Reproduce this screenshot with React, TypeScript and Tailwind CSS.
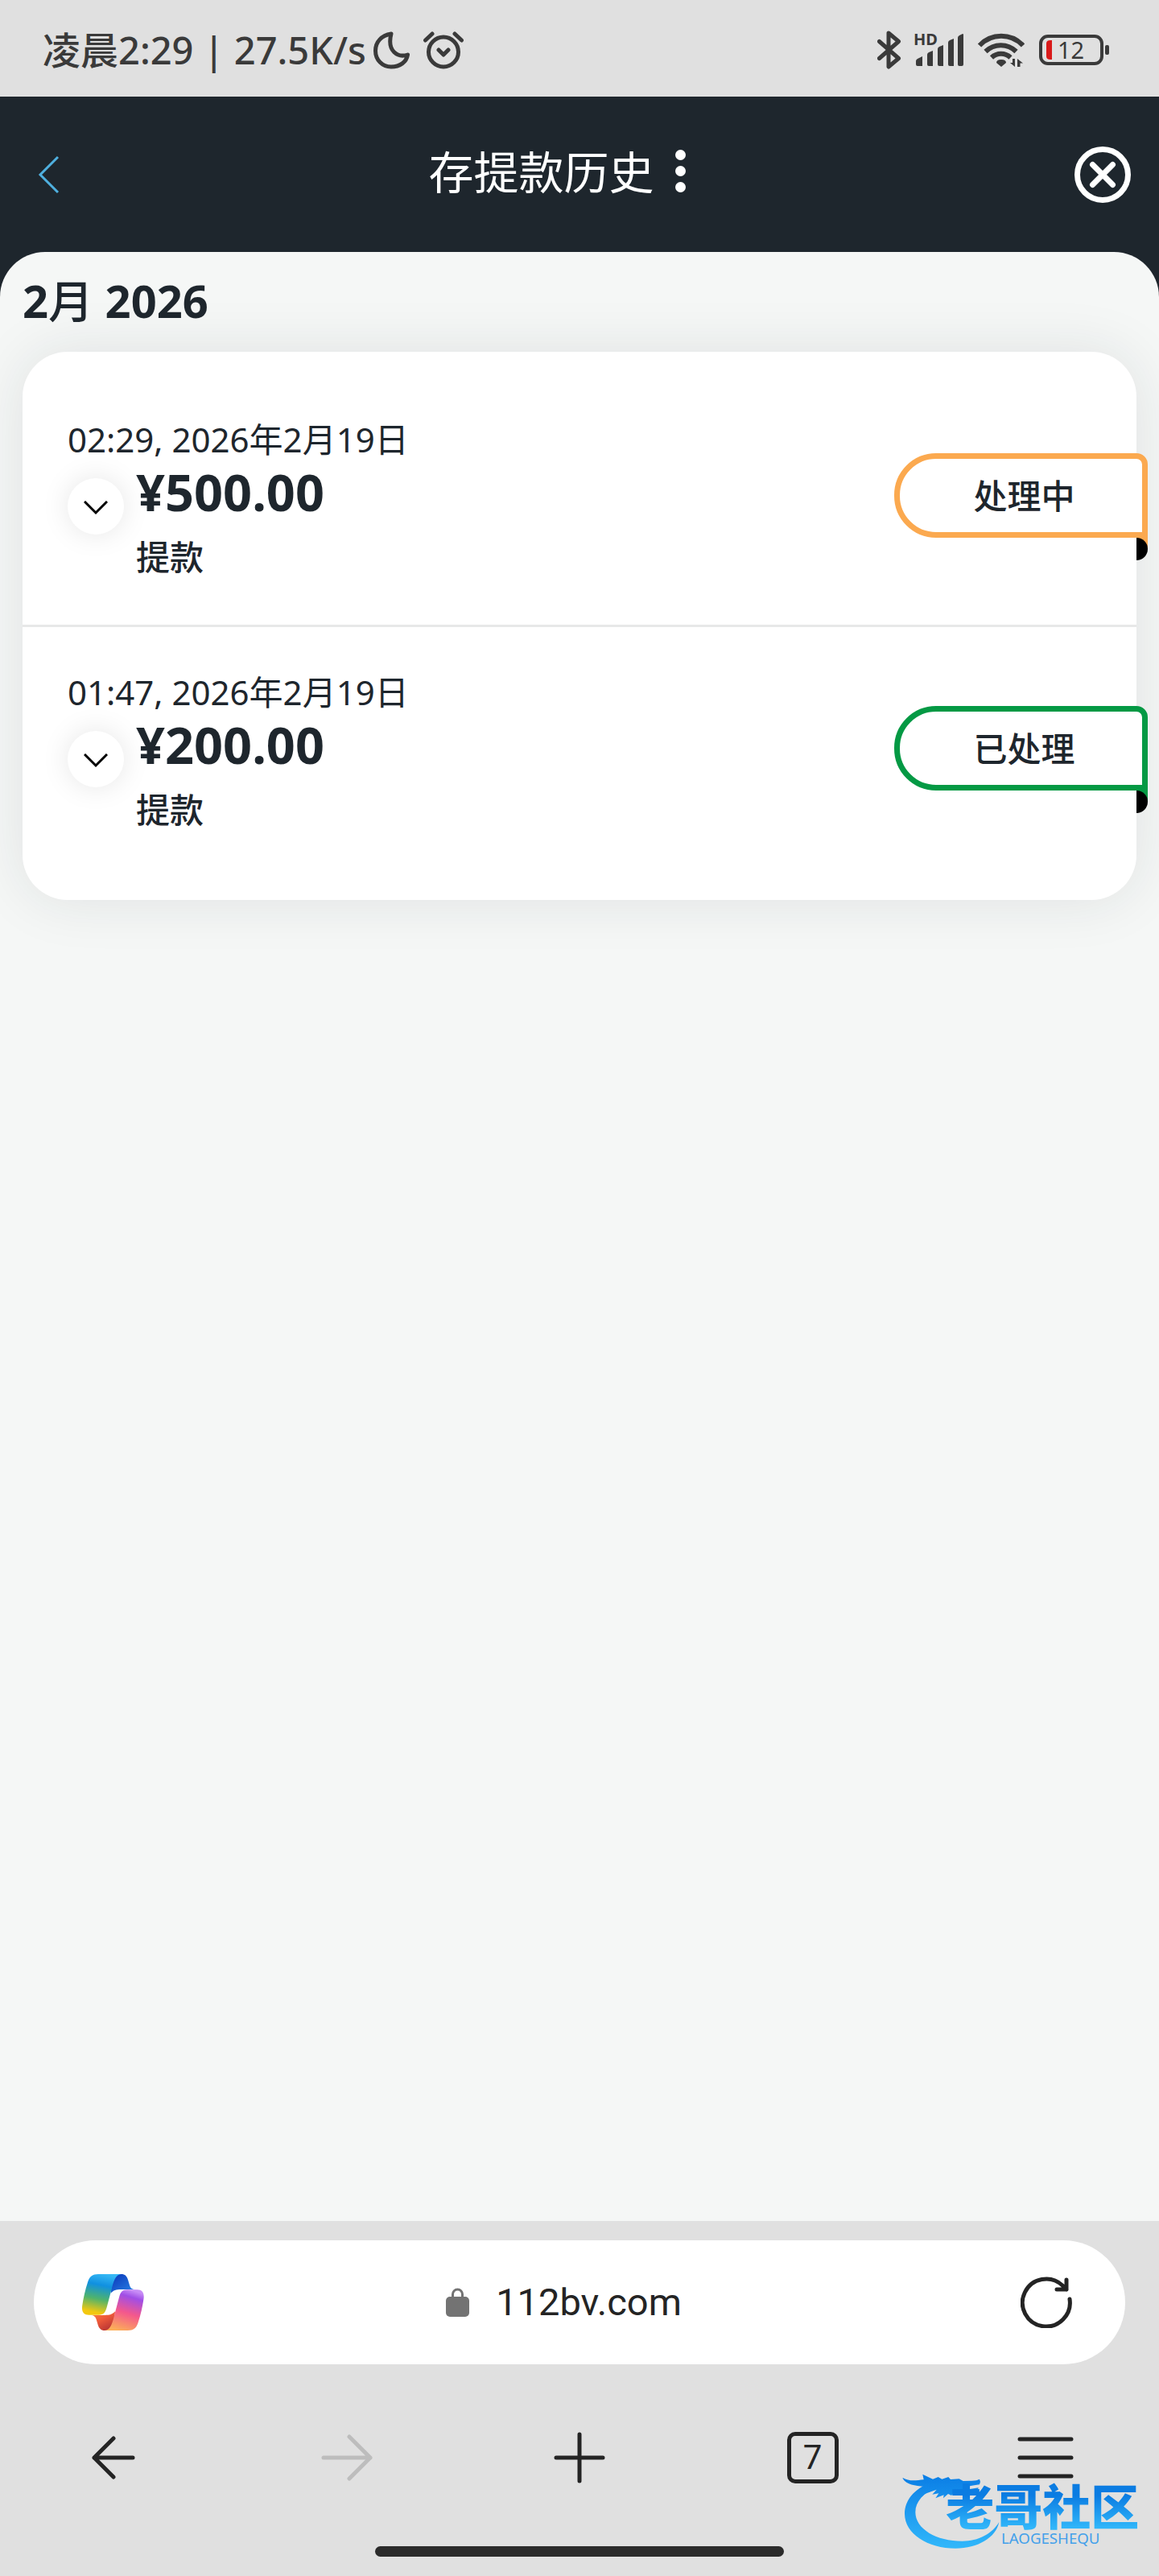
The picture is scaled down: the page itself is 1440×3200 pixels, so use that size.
interface Transaction {
  date: string;
  amount: string;
  type: string;
  status: string;
  borderColor: string;
  foldColor: string;
}

const transactions: Transaction[] = [
  {
    date: '02:29, 2026年2月19日',
    amount: '¥500.00',
    type: '提款',
    status: '处理中',
    borderColor: 'border-[#fba94f]',
    foldColor: 'bg-[#fba94f]',
  },
  {
    date: '01:47, 2026年2月19日',
    amount: '¥200.00',
    type: '提款',
    status: '已处理',
    borderColor: 'border-[#049944]',
    foldColor: 'bg-[#049944]',
  },
];

function StatusBar() {
  return (
    <div className="h-[120px] bg-[#e0e0e0] pt-[3px] pl-[53px] pr-[61px] flex items-center justify-between text-[#3a3a3a]">
      <div className="flex items-center">
        <span className="text-[47px] leading-[60px] font-medium whitespace-nowrap">凌晨2:29 | 27.5K/s</span>
        <svg className="ml-2 w-[46px] h-[48px]" viewBox="0 0 46 48" fill="none" stroke="currentColor" strokeWidth="5" strokeLinejoin="round">
          <path d="M23 4C11 6 3.500 14 3.500 25c0 11.500 8.500 20 19.500 20 11 0 19-6 20.500-15-12 4-26-4-20.500-26Z" />
        </svg>
        <svg className="ml-4 w-[52px] h-[48px]" viewBox="0 0 52 48" fill="none" stroke="currentColor" strokeWidth="5" strokeLinecap="round" strokeLinejoin="round">
          <circle cx="26" cy="26.500" r="18.500" />
          <path d="m20 24 6 6 6-6M3.500 12 12 4M48.500 12 40 4" />
        </svg>
      </div>

      <div className="flex items-center gap-[15px]">
        <svg className="w-[30px] h-[48px]" viewBox="0 0 30 48" fill="none" stroke="currentColor" strokeWidth="5" strokeLinecap="round" strokeLinejoin="round">
          <path d="m2.500 13.500 24 21L14 45V3l12.500 10.500-24 21" />
        </svg>
        <svg className="w-[64px] h-[44px] overflow-visible" viewBox="0 0 64 44" fill="currentColor">
          <text x="0" y="16" fontSize="20" fontWeight="700">HD</text>
          <path d="M3 36q0-2 2-3l6-3v12H5q-2 0-2-2ZM17 28q0-2 2-3l5-2v19h-5q-2 0-2-2ZM30 21q0-2 2-3l5-2v26h-5q-2 0-2-2ZM43 13q0-2 2-3l5-2v34h-5q-2 0-2-2ZM55 7q0-2 2-3l4-2q1 0 1 1v37q0 2-2 2h-3q-2 0-2-2Z" />
        </svg>
        <svg className="w-[60px] h-[44px]" viewBox="0 0 60 44" fill="none" stroke="currentColor" strokeWidth="6">
          <path d="M3 16.500a37 37 0 0 1 54 0M10.500 24a27 27 0 0 1 38 0M18 31.500a17 17 0 0 1 23.500 0" />
          <path d="m30 43-6-5q0-4 6-4t6 4Z" fill="currentColor" stroke="none" />
          <path d="M47 33v10l-6-5h3v-5ZM50 43V33l7 5.500h-3.500V43Z" fill="currentColor" stroke="none" />
        </svg>
        <svg className="w-[90px] h-[40px]" viewBox="0 0 90 40" fill="none">
          <rect x="4" y="3" width="76" height="34" rx="9" stroke="currentColor" strokeWidth="4" />
          <rect x="84" y="14" width="5" height="12" rx="2" fill="currentColor" />
          <path d="M16 8h2v24h-2q-5 0-5-4V12q0-4 5-4Z" fill="#d91a1a" />
          <text x="25" y="31" fontSize="29" fill="currentColor">12</text>
        </svg>
      </div>
    </div>
  );
}

function PageHeader() {
  return (
    <header className="h-[193px] px-[35px] flex items-center justify-between text-white">
      <button type="button" aria-label="返回" className="w-[70px] flex text-[#4fb0df]">
        <svg className="ml-3 w-[27px] h-[48px]" viewBox="0 0 27 48" fill="none" stroke="currentColor" strokeWidth="3">
          <path d="M25 2 3 24l22 22" />
        </svg>
      </button>
      <div className="-mt-2 flex items-center gap-[26px] pr-[56px]">
        <h1 className="text-[56px] leading-[76px] whitespace-nowrap">存提款历史</h1>
        <button type="button" aria-label="更多" className="flex flex-col gap-[7px]">
          <span className="size-[13px] rounded-full bg-white" />
          <span className="size-[13px] rounded-full bg-white" />
          <span className="size-[13px] rounded-full bg-white" />
        </button>
      </div>
      <button type="button" aria-label="关闭">
        <svg className="size-[70px]" viewBox="0 0 70 70" fill="none" stroke="currentColor" strokeWidth="7" strokeLinecap="round">
          <circle cx="35" cy="35" r="31.500" />
          <path d="m22.500 22.500 25 25M47.500 22.500l-25 25" />
        </svg>
      </button>
    </header>
  );
}

function TransactionRow({ item }: { item: Transaction }) {
  return (
    <li className="pl-14 pt-[53px] pb-14 flex items-start justify-between not-last:border-b-3 border-[#e7e8e8]">
      <div>
        <p className="text-[42px] leading-[55px]">{item.date}</p>
        <div className="flex items-start gap-[15px]">
          <button
            type="button"
            aria-label="展开"
            className="mt-[21px] size-[70px] shrink-0 rounded-full bg-white shadow-[0_0_35px_rgba(0,0,0,0.1)] flex items-center justify-center text-black"
          >
            <svg className="mt-1 w-[30px] h-[18px]" viewBox="0 0 30 18" fill="none" stroke="currentColor" strokeWidth="3">
              <path d="m1 1 14 14L29 1" />
            </svg>
          </button>
          <div>
            <p className="text-[63px] leading-[76px] font-bold">{item.amount}</p>
            <p className="mt-[15px] text-[42px] leading-[56px] font-medium">{item.type}</p>
          </div>
        </div>
      </div>

      {/* Ribbon that folds over the right edge of the card */}
      <div
        className={`relative mt-[45px] -mr-[14px] w-[315px] h-[105px] pl-2 border-7 rounded-l-[52px] rounded-tr-[14px] bg-white flex items-center justify-center ${item.borderColor}`}
      >
        <span className="text-[42px] leading-[56px] font-medium">{item.status}</span>
        <span className={`absolute -right-[7px] top-[98px] size-[14px] ${item.foldColor}`} />
        <span className="absolute -right-[7px] top-[98px] w-[14px] h-[28px] rounded-r-full bg-black" />
      </div>
    </li>
  );
}

function CopilotLogo() {
  return (
    <svg className="w-[77px] h-[70px]" viewBox="65 75 231 210">
      <defs>
        <linearGradient id="ribbonLeft" x1="0.6" y1="0" x2="0.4" y2="1">
          <stop offset="0" stopColor="#36b8f5" />
          <stop offset="0.28" stopColor="#1090e0" />
          <stop offset="0.62" stopColor="#4fb36c" />
          <stop offset="0.95" stopColor="#f3c80f" />
        </linearGradient>
        <linearGradient id="ribbonRight" x1="0.65" y1="0" x2="0.35" y2="1">
          <stop offset="0" stopColor="#c78cf6" />
          <stop offset="0.16" stopColor="#a04ee6" />
          <stop offset="0.55" stopColor="#f4588c" />
          <stop offset="1" stopColor="#fcae58" />
        </linearGradient>
        <linearGradient id="foldTop" x1="0" y1="0" x2="1" y2="1">
          <stop offset="0" stopColor="#0a35b8" />
          <stop offset="1" stopColor="#2a86e8" />
        </linearGradient>
        <linearGradient id="foldBottom" x1="0" y1="0" x2="0.7" y2="1">
          <stop offset="0" stopColor="#ff8a3c" />
          <stop offset="0.5" stopColor="#ee5a3a" />
          <stop offset="1" stopColor="#b83434" />
        </linearGradient>
      </defs>
      <path d="M195 75h16c14 0 21 8 25 21l6 20c3 10 9 16 22 16h-54c-18 0-28 3-38 14l4-50Z" fill="url(#foldTop)" />
      <path d="M165 285h-16c-14 0-21-8-25-21l-6-20c-3-10-9-16-22-16h54c18 0 28-3 38-14l-4 50Z" fill="url(#foldBottom)" />
      <path d="M125 75h86c-20 2-27 22-34 48l-20 76c-6 20-12 28-30 28H90c-21 0-28-14-24-37 4-25 10-55 21-88 6-18 17-27 38-27Z" fill="url(#ribbonLeft)" />
      <path d="M235 285h-86c20-2 27-22 34-48l20-76c6-20 12-28 30-28h37c21 0 28 14 24 37-4 25-10 55-21 88-6 18-17 27-38 27Z" fill="url(#ribbonRight)" />
    </svg>
  );
}

function AddressBar() {
  return (
    <div className="h-[154px] pl-[60px] pr-[66px] rounded-full bg-white flex items-center">
      <button type="button" aria-label="Copilot">
        <CopilotLogo />
      </button>
      <button type="button" aria-label="地址栏" className="flex-1 pr-[46px] flex items-center justify-center gap-[33px]">
        <svg className="w-[29px] h-[36px]" viewBox="0 0 29 36" fill="none">
          <rect y="11" width="29" height="25" rx="5" fill="#737373" />
          <path d="M8.500 13V8a6 6 0 0 1 12 0v5" stroke="#737373" strokeWidth="3" />
        </svg>
        <span className="text-[47px] leading-[60px] font-[Roboto,sans-serif]">112bv.com</span>
      </button>
      <button type="button" aria-label="刷新">
        <svg className="size-[64px]" viewBox="0 0 64 64" fill="none" stroke="currentColor" strokeWidth="5" strokeLinecap="round" strokeLinejoin="round">
          <path d="M61 28a29.500 29.500 0 1 1-9-17l5 5M57 4v12H45" />
        </svg>
      </button>
    </div>
  );
}

function NavBar() {
  return (
    <nav className="px-[99px] pt-[74px] flex items-center justify-between">
      <button type="button" aria-label="后退" className="w-[84px] h-[84px] flex items-center justify-center">
        <svg className="w-[54px] h-[54px]" viewBox="0 0 54 54" fill="none" stroke="currentColor" strokeWidth="5" strokeLinecap="round" strokeLinejoin="round">
          <path d="M51 27H3M27 3 3 27l24 24" />
        </svg>
      </button>
      <button type="button" aria-label="前进" disabled className="w-[84px] h-[84px] flex items-center justify-center text-[#bdbdbd]">
        <svg className="w-[64px] h-[58px]" viewBox="0 0 64 58" fill="none" stroke="currentColor" strokeWidth="5" strokeLinecap="round" strokeLinejoin="round">
          <path d="M3 29h58M35 3l26 26-26 26" />
        </svg>
      </button>
      <button type="button" aria-label="新建标签页" className="w-[84px] h-[84px] flex items-center justify-center">
        <svg className="size-[64px]" viewBox="0 0 64 64" fill="none" stroke="currentColor" strokeWidth="5" strokeLinecap="round">
          <path d="M32 3v58M3 32h58" />
        </svg>
      </button>
      <button type="button" aria-label="标签页" className="w-[84px] h-[84px] flex items-center justify-center">
        <span className="size-[64px] border-5 border-[#242424] rounded-[10px] flex items-center justify-center text-[42px] leading-[54px] font-[Roboto,sans-serif]">
          7
        </span>
      </button>
      <button type="button" aria-label="菜单" className="w-[84px] h-[84px] flex items-center justify-center">
        <svg className="w-[70px] h-[52px]" viewBox="0 0 70 52" fill="none" stroke="currentColor" strokeWidth="5" strokeLinecap="round">
          <path d="M3 3h64M3 26h64M3 49h64" />
        </svg>
      </button>
    </nav>
  );
}

function CommunityLogo() {
  return (
    <svg className="absolute right-5 bottom-[30px] w-[300px] h-[105px] overflow-visible" viewBox="60 45 900 315">
      <defs>
        <linearGradient id="logoBlue" gradientUnits="userSpaceOnUse" x1="0" y1="80" x2="0" y2="340">
          <stop offset="0" stopColor="#0b7fe6" />
          <stop offset="1" stopColor="#30b6fa" />
        </linearGradient>
        <linearGradient id="wordBlue" gradientUnits="userSpaceOnUse" x1="0" y1="150" x2="0" y2="270">
          <stop offset="0" stopColor="#0b7ce2" />
          <stop offset="1" stopColor="#30b6fa" />
        </linearGradient>
      </defs>
      <g fill="url(#logoBlue)">
        <path d="M170 102C105 125 72 170 72 218c0 74 86 129 190 129 83 0 150-40 162-98-27 44-77 71-137 71-96 0-175-45-175-108 0-39 30-72 82-94Z" />
        <path d="M65 84c22 14 48 10 78 7l-4-20 38 18 20-8 14 8 24-8 8 9 32-2 15 8 32-1c14-1 22-2 29-6l3 10-3 10c-20 3-38 5-50 10l14 7 32-5-6 19-28 3-24-7-8 7-25-3-10 10-12-6-18 16 2-12-31 12 12-18-24 4 16-18-44 16 14-17-27 4 11-14c-35-4-65-6-80-30Z" />
      </g>
      <text x="226" y="262" fontSize="180" fontWeight="900" fill="url(#wordBlue)">老哥社区</text>
      <text x="432" y="329" fontSize="56" fill="#44a0ea">LAOGESHEQU</text>
    </svg>
  );
}

export default function App() {
  return (
    <div className="relative min-h-screen flex flex-col bg-[#1e262d] font-['Noto_Sans','Noto_Sans_CJK_SC',sans-serif]">
      <StatusBar />
      <PageHeader />

      <main className="flex-1 rounded-t-[56px] bg-[#f5f7f6] px-7 pt-[22px] text-[#1e262d]">
        <h2 className="text-[56px] leading-[76px] font-bold">
          2<span className="font-medium">月</span> 2026
        </h2>
        <ul className="mt-[26px] py-7 rounded-[56px] bg-white shadow-[0_0_70px_rgba(30,38,45,0.1)]">
          {transactions.map((item) => (
            <TransactionRow key={item.date} item={item} />
          ))}
        </ul>
      </main>

      <footer className="bg-[#e0e0e0] px-[42px] pt-6 pb-6 text-[#242424]">
        <AddressBar />
        <div className="-mx-[42px]">
          <NavBar />
        </div>
        <div className="mx-auto mt-[68px] w-[508px] h-[13px] rounded-full bg-[#2b2b2b]" />
      </footer>

      <CommunityLogo />
    </div>
  );
}
